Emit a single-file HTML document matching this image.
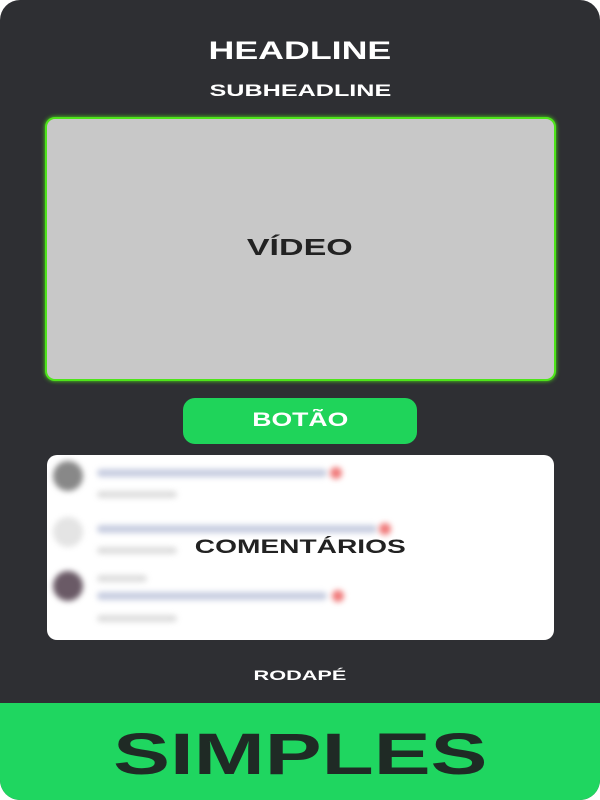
<!DOCTYPE html><html><head><style>
body{margin:0;width:600px;height:800px;background:#fff;font-family:"Liberation Sans",sans-serif;overflow:hidden}
.card{position:absolute;left:0;top:0;width:600px;height:800px;background:#2e2f33;border-radius:20px;overflow:hidden}
.t{position:absolute;left:0;width:600px;text-align:center;font-weight:bold;white-space:nowrap}
.t span{display:inline-block;transform:scaleX(1.48)}
.video{position:absolute;left:45px;top:117px;width:507px;height:260px;background:#c8c8c8;border:2px solid #4ee41a;border-radius:10px;box-shadow:0 0 4px #4ee41a}
.btn{position:absolute;left:183px;top:398px;width:234px;height:46px;background:#1fd45a;border-radius:12px}
.com{position:absolute;left:47px;top:455px;width:507px;height:185px;background:#fff;border-radius:10px;overflow:hidden}
.b{position:absolute;filter:blur(3px);border-radius:4px}
.foot{position:absolute;left:0;top:703px;width:600px;height:97px;background:#1fd660}
</style></head><body><div class="card">
<div class="t" style="top:37px;font-size:25px;color:#fff"><span style="transform:scaleX(1.43)">HEADLINE</span></div>
<div class="t" style="top:81px;font-size:17px;color:#fff"><span>SUBHEADLINE</span></div>
<div class="video"></div>
<div class="t" style="top:234px;font-size:23px;color:#222"><span>VÍDEO</span></div>
<div class="btn"></div>
<div class="t" style="top:410px;font-size:19px;color:#fff"><span style="transform:scaleX(1.4)">BOTÃO</span></div>
<div class="com">
<div class="b" style="left:6px;top:6px;width:30px;height:30px;border-radius:50%;background:#888"></div>
<div class="b" style="left:50px;top:14px;width:230px;height:8px;background:#c7cde0"></div>
<div class="b" style="left:283px;top:12px;width:12px;height:12px;border-radius:50%;background:#f07a7a"></div>
<div class="b" style="left:50px;top:36px;width:80px;height:7px;background:#ddd"></div>
<div class="b" style="left:6px;top:62px;width:30px;height:30px;border-radius:50%;background:#e4e4e4"></div>
<div class="b" style="left:50px;top:70px;width:280px;height:8px;background:#c7cde0"></div>
<div class="b" style="left:332px;top:68px;width:12px;height:12px;border-radius:50%;background:#f07a7a"></div>
<div class="b" style="left:50px;top:92px;width:80px;height:7px;background:#ddd"></div>
<div class="b" style="left:6px;top:116px;width:30px;height:30px;border-radius:50%;background:#6a5a66"></div>
<div class="b" style="left:50px;top:120px;width:50px;height:7px;background:#ddd"></div>
<div class="b" style="left:50px;top:137px;width:230px;height:8px;background:#c7cde0"></div>
<div class="b" style="left:285px;top:135px;width:12px;height:12px;border-radius:50%;background:#f07a7a"></div>
<div class="b" style="left:50px;top:160px;width:80px;height:7px;background:#ddd"></div>
</div>
<div class="t" style="top:537px;font-size:19px;color:#222"><span>COMENTÁRIOS</span></div>
<div class="t" style="top:667px;font-size:14px;color:#fff"><span style="transform:scaleX(1.55)">RODAPÉ</span></div>
<div class="foot"></div>
<div class="t" style="top:721px;font-size:58px;color:#1f2a25"><span style="transform:scaleX(1.47)">SIMPLES</span></div>
</div></body></html>
